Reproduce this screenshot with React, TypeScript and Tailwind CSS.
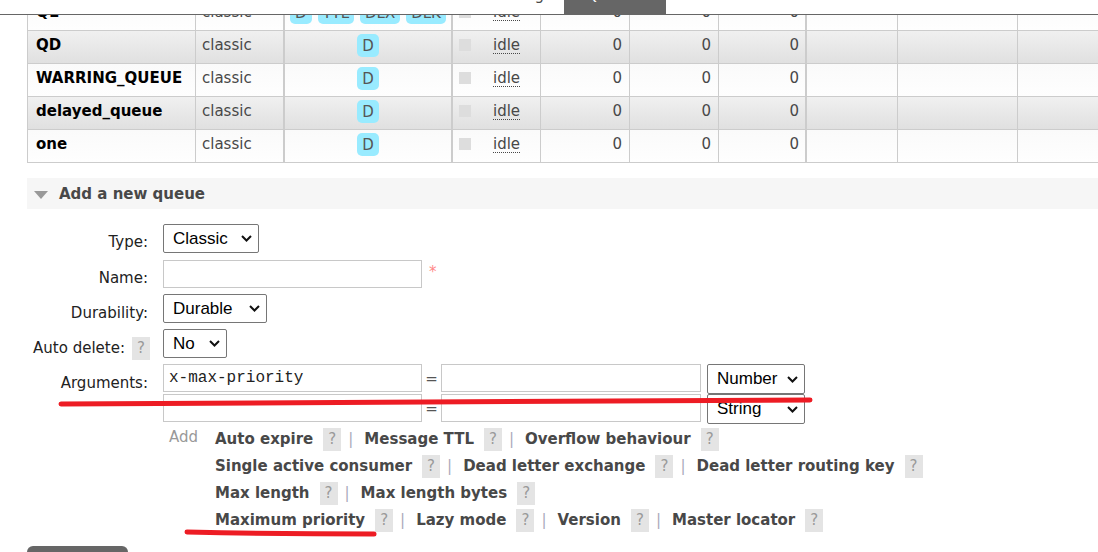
import React from 'react';

const rows = [
  { name: 'Q1', features: ['D', 'TTL', 'DLX', 'DLK'], alt: false },
  { name: 'QD', features: ['D'], alt: true },
  { name: 'WARRING_QUEUE', features: ['D'], alt: false },
  { name: 'delayed_queue', features: ['D'], alt: true },
  { name: 'one', features: ['D'], alt: false },
];

const argLines = [
  ['Auto expire', 'Message TTL', 'Overflow behaviour'],
  ['Single active consumer', 'Dead letter exchange', 'Dead letter routing key'],
  ['Max length', 'Max length bytes'],
  ['Maximum priority', 'Lazy mode', 'Version', 'Master locator'],
];

const Help = () => (
  <span className="inline-flex h-[23px] w-[18px] shrink-0 items-center justify-center bg-[#e4e4e4] text-[15px] text-[#999]">
    ?
  </span>
);

const Chevron = () => (
  <svg width="11" height="7" viewBox="0 0 11 7" className="shrink-0">
    <path d="M1 1l4.5 4.5L10 1" stroke="#111" strokeWidth="2" fill="none" />
  </svg>
);

const Select = ({ label, size }: { label: string; size: string }) => (
  <div
    className={`flex items-center justify-between rounded-[2px] border border-[#767676] bg-white pl-[9px] pr-[6px] font-['Liberation_Sans',Arial,sans-serif] text-[17px] text-black ${size}`}
  >
    <span>{label}</span>
    <Chevron />
  </div>
);

const TextInput = ({ value = '', size }: { value?: string; size: string }) => (
  <input
    readOnly
    value={value}
    className={`border border-[#c8c8c8] bg-white px-[5px] font-['Liberation_Mono','Courier_New',monospace] text-[16px] text-[#222] outline-none ${size}`}
  />
);

const App: React.FC = () => {
  return (
    <div className="relative h-[552px] w-[1098px] overflow-hidden bg-white font-['DejaVu_Sans',Verdana,sans-serif] text-[15px] text-[#484848]">
      {/* top tabs, mostly scrolled away */}
      <div className="flex h-[15px] overflow-hidden border-b border-[#666]">
        <div className="ml-[480px] w-[84px]">
          <div className="-mt-[12px] leading-[15px]">Exchanges</div>
        </div>
        <div className="w-[102px] bg-[#666] text-center text-white">
          <div className="-mt-[12px] leading-[15px]">Queues</div>
        </div>
      </div>

      {/* queues table */}
      <div className="overflow-hidden">
        <div className="-mt-[17px] ml-[27px] w-[1200px]">
          {rows.map((row, i) => (
            <div
              key={i}
              className={`flex h-[33px] border-b border-[#ccc] bg-linear-to-b ${
                row.alt ? 'from-[#f0f0f0] to-[#e0e0e0]' : 'from-[#fafafa] to-[#fefefe]'
              }`}
            >
              <div className="flex w-[169px] items-center border-x border-[#ccc] pb-[4px] pl-[8px] font-bold text-black">
                {row.name}
              </div>
              <div className="flex w-[89px] items-center border-r-2 border-[#ccc] pb-[4px] pl-[6px]">
                classic
              </div>
              <div className="flex w-[168px] items-center justify-center gap-[6px] border-r-2 border-[#ccc] pb-[3px]">
                {row.features.map((f) => (
                  <span key={f} className="h-[23px] rounded-[5px] bg-[#99ebff] px-[5px] leading-[24px] text-[#555]">
                    {f}
                  </span>
                ))}
              </div>
              <div className="flex w-[88px] items-center border-r border-[#ccc] pb-[4px] pl-[6px]">
                <span className="h-[12px] w-[12px] bg-[#ddd]" />
                <span className="ml-[22px] border-b border-dotted border-[#484848] leading-[16px]">idle</span>
              </div>
              <div className="flex w-[89px] items-center justify-end border-r border-[#ccc] pb-[4px] pr-[7px]">0</div>
              <div className="flex w-[89px] items-center justify-end border-r border-[#ccc] pb-[4px] pr-[7px]">0</div>
              <div className="flex w-[88px] items-center justify-end border-r-2 border-[#ccc] pb-[4px] pr-[6px]">0</div>
              <div className="w-[91px] border-r border-[#ccc]" />
              <div className="w-[120px] border-r border-[#ccc]" />
              <div className="w-[120px] border-r border-[#ccc]" />
            </div>
          ))}
        </div>
      </div>

      {/* Add a new queue */}
      <div className="ml-[27px] mt-[15px] flex h-[31px] items-center bg-[#f6f6f6] pt-[2px]">
        <svg width="14" height="8" viewBox="0 0 14 8" className="ml-[7px]">
          <path d="M0 0h14L7 8z" fill="#999" />
        </svg>
        <span className="ml-[11px] font-bold text-[#484848]">Add a new queue</span>
      </div>

      <div className="mt-[12px] text-[#222]">
        <div className="flex h-[35px] items-center">
          <div className="w-[148px] pt-[8px] text-right">Type:</div>
          <div className="ml-[15px]">
            <Select label="Classic" size="h-[29px] w-[96px]" />
          </div>
        </div>
        <div className="flex h-[35px] items-center">
          <div className="w-[148px] pt-[9px] text-right">Name:</div>
          <TextInput size="ml-[15px] h-[28px] w-[259px]" />
          <span className="ml-[7px] pb-[2px] text-[#f88]">*</span>
        </div>
        <div className="flex h-[35px] items-center">
          <div className="w-[148px] pt-[9px] text-right">Durability:</div>
          <div className="ml-[15px]">
            <Select label="Durable" size="h-[29px] w-[104px]" />
          </div>
        </div>
        <div className="flex h-[35px] items-center">
          <div className="flex w-[150px] items-center justify-end pt-[9px]">
            <span>Auto delete:</span>
            <span className="ml-[7px]">
              <Help />
            </span>
          </div>
          <div className="ml-[13px]">
            <Select label="No" size="h-[29px] w-[64px]" />
          </div>
        </div>

        <div className="mt-[3px] flex h-[30px] items-start">
          <div className="w-[148px] pt-[10px] text-right leading-[18px]">Arguments:</div>
          <TextInput value="x-max-priority" size="ml-[15px] h-[28px] w-[259px]" />
          <div className="w-[19px] pt-[4px] text-center text-[#555]">=</div>
          <TextInput size="h-[28px] w-[260px]" />
          <div className="ml-[6px]">
            <Select label="Number" size="h-[30px] w-[98px]" />
          </div>
        </div>
        <div className="flex h-[30px] items-start">
          <div className="w-[150px]" />
          <TextInput size="ml-[13px] h-[28px] w-[259px]" />
          <div className="w-[19px] pt-[4px] text-center text-[#555]">=</div>
          <TextInput size="h-[28px] w-[260px]" />
          <div className="ml-[6px]">
            <Select label="String" size="h-[30px] w-[98px]" />
          </div>
        </div>

        <div className="ml-[163px] mt-[4px] flex">
          <div className="w-[52px] pl-[6px] leading-[18px] text-[#999]">Add</div>
          <div className="flex flex-col gap-[4px]">
            {argLines.map((line, li) => (
              <div key={li} className="flex h-[23px] items-center">
                {line.map((label, k) => (
                  <React.Fragment key={label}>
                    {k > 0 && (
                      <>
                        <span className="ml-[7px] text-[#aab]">|</span>
                        <span className="w-[11px]" />
                      </>
                    )}
                    <span className="font-bold text-[#484848]">{label}</span>
                    <span className="ml-[10px]">
                      <Help />
                    </span>
                  </React.Fragment>
                ))}
              </div>
            ))}
          </div>
        </div>

        <div className="ml-[27px] mt-[14px] h-[30px] w-[101px] rounded-t-[6px] bg-[#666]" />
      </div>

      {/* red annotation strokes */}
      <svg className="pointer-events-none absolute left-0 top-0" width="1098" height="552">
        <path d="M61 404 Q 420 401 810 400" stroke="#ed1c24" strokeWidth="5" strokeLinecap="round" fill="none" />
        <path d="M187 532 Q 280 534 374 534" stroke="#ed1c24" strokeWidth="5" strokeLinecap="round" fill="none" />
      </svg>
    </div>
  );
};

export default App;
